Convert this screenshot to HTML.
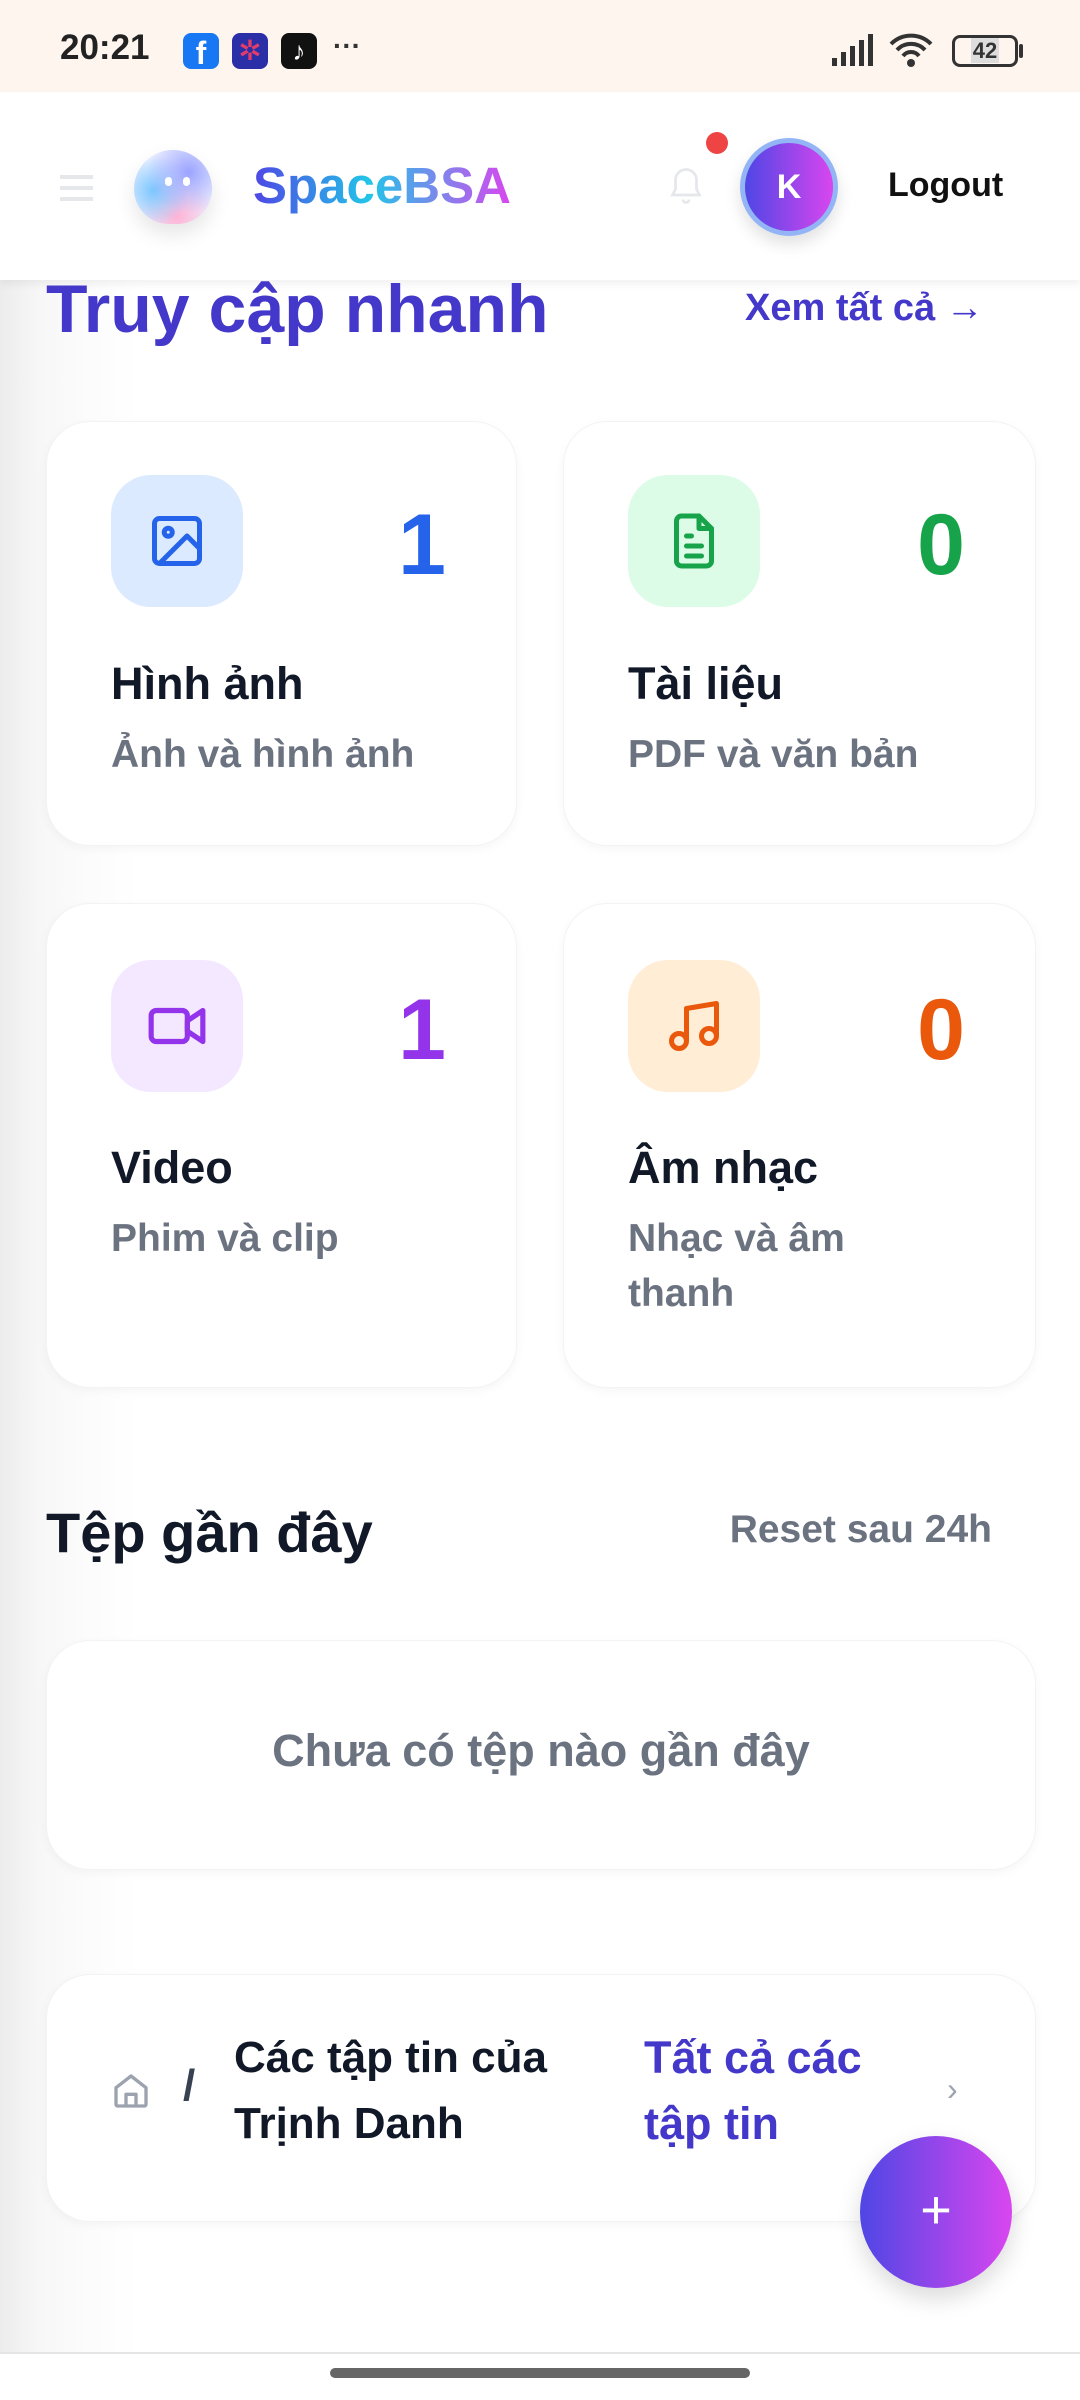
<!DOCTYPE html>
<html><head><meta charset="utf-8">
<style>
*{margin:0;padding:0;box-sizing:border-box}
body{width:1080px;height:2400px;position:relative;overflow:hidden;font-family:"Liberation Sans","Noto Sans CJK SC",sans-serif;background:linear-gradient(90deg,#ececec 0,#f7f7f7 40px,#fcfcfc 90px,#fff 140px)}
.abs{position:absolute}
.status{left:0;top:0;width:1080px;height:92px;background:#fdf5ee}
.header{left:0;top:92px;width:1080px;height:188px;background:#fff;box-shadow:0 4px 8px rgba(0,0,0,.06)}
.card{background:#fff;border-radius:44px;box-shadow:0 3px 10px rgba(0,0,0,.04);border:1px solid #f3f3f3}
.ib{width:132px;height:132px;border-radius:40px;display:flex;align-items:center;justify-content:center}
.num{font-weight:bold;font-size:86px;line-height:1}
.t{font-weight:bold;font-size:45px;color:#111827}
.s{font-weight:bold;font-size:39px;color:#6b7280;line-height:55px}
</style></head><body>
<div class="abs status">
 <div class="abs" style="left:60px;top:28px;font-size:35px;font-weight:bold;color:#222">20:21</div>
 <div class="abs" style="left:183px;top:33px;width:36px;height:36px;border-radius:8px;background:#1877f2;color:#fff;font-weight:bold;font-size:32px;text-align:center;line-height:40px">f</div>
 <div class="abs" style="left:232px;top:33px;width:36px;height:36px;border-radius:8px;background:#2a2fa8;color:#e23d6a;font-size:28px;text-align:center;line-height:36px">✲</div>
 <div class="abs" style="left:281px;top:33px;width:36px;height:36px;border-radius:8px;background:#111;color:#fff;font-size:26px;text-align:center;line-height:36px">♪</div>
 <div class="abs" style="left:333px;top:30px;font-size:28px;color:#333;font-weight:bold">···</div>
 <svg class="abs" style="left:832px;top:34px" width="48" height="32"><rect x="0" y="24" width="5" height="8" fill="#333"/><rect x="9" y="18" width="5" height="14" fill="#333"/><rect x="18" y="12" width="5" height="20" fill="#333"/><rect x="27" y="6" width="5" height="26" fill="#333"/><rect x="36" y="0" width="5" height="32" fill="#333"/></svg>
 <svg class="abs" style="left:888px;top:32px" width="46" height="36" viewBox="0 0 46 36"><path d="M3 12a28 28 0 0 1 40 0M9 18a19 19 0 0 1 28 0M15 24a10 10 0 0 1 16 0" stroke="#333" stroke-width="4" fill="none"/><circle cx="23" cy="31" r="4" fill="#333"/></svg>
 <div class="abs" style="left:952px;top:35px;width:66px;height:32px;border:3px solid #333;border-radius:8px;font-size:22px;font-weight:bold;color:#333;text-align:center;line-height:26px"><span style="background:#ddd;padding:0 2px">42</span></div>
 <div class="abs" style="left:1019px;top:44px;width:4px;height:14px;background:#333;border-radius:2px"></div>
</div>
<div class="abs header">
 <div class="abs" style="left:60px;top:83px;width:33px;height:4px;background:#e5e7eb;box-shadow:0 11px 0 #e5e7eb,0 22px 0 #e5e7eb"></div>
 <div class="abs" style="left:134px;top:58px;width:78px;height:74px;border-radius:40px 40px 36px 36px;background:radial-gradient(circle at 70% 30%,#9aa3ff,transparent 55%),radial-gradient(circle at 25% 55%,#7bc7ff,transparent 50%),radial-gradient(circle at 55% 90%,#ffb3d6,transparent 50%),#eef0ff;box-shadow:0 10px 20px rgba(0,0,0,.1)"></div>
 <div class="abs" style="left:165px;top:85px;width:7px;height:9px;border-radius:4px;background:#fff"></div>
 <div class="abs" style="left:183px;top:85px;width:7px;height:9px;border-radius:4px;background:#fff"></div>
 <div class="abs" style="left:253px;top:64px;font-size:51px;font-weight:bold;background:linear-gradient(90deg,#4f46e5,#22c5e8 45%,#d946ef);-webkit-background-clip:text;color:transparent">SpaceBSA</div>
 <svg class="abs" style="left:668px;top:72px" width="36" height="44" viewBox="0 0 24 28"><path d="M12 3a7 7 0 0 0-7 7v6l-2 4h18l-2-4v-6a7 7 0 0 0-7-7zM10 23a2 2 0 0 0 4 0" stroke="#e5e7eb" stroke-width="1.8" fill="none"/></svg>
 <div class="abs" style="left:706px;top:40px;width:22px;height:22px;border-radius:50%;background:#ef4444"></div>
 <div class="abs" style="left:740px;top:46px;width:98px;height:98px;border-radius:50%;border:5px solid #93b4f5;background:linear-gradient(90deg,#4f46e5,#d946ef);color:#fff;font-weight:bold;font-size:34px;text-align:center;line-height:88px;box-shadow:0 8px 16px rgba(0,0,0,.12)">K</div>
 <div class="abs" style="left:888px;top:74px;font-size:34px;font-weight:bold;color:#111">Logout</div>
</div>
<div class="abs" style="left:46px;top:270px;font-size:68px;font-weight:bold;color:#4338ca">Truy cập nhanh</div>
<div class="abs" style="left:745px;top:287px;font-size:38px;font-weight:bold;color:#4338ca">Xem tất cả →</div>

<div class="abs card" style="left:46px;top:421px;width:471px;height:425px">
 <div class="abs ib" style="left:64px;top:53px;background:#dbeafe"><svg width="60" height="60" viewBox="0 0 24 24" fill="none" stroke="#2563eb" stroke-width="2" stroke-linejoin="round"><rect x="3" y="3" width="18" height="18" rx="2"/><circle cx="8.5" cy="8.5" r="1.6"/><path d="M21 15l-5-5L5 21"/></svg></div>
 <div class="abs num" style="right:70px;top:80px;color:#2563eb">1</div>
 <div class="abs t" style="left:64px;top:236px">Hình ảnh</div>
 <div class="abs s" style="left:64px;top:305px">Ảnh và hình ảnh</div>
</div>
<div class="abs card" style="left:563px;top:421px;width:473px;height:425px">
 <div class="abs ib" style="left:64px;top:53px;background:#dcfce7"><svg width="60" height="60" viewBox="0 0 24 24" fill="none" stroke="#16a34a" stroke-width="2" stroke-linejoin="round" stroke-linecap="round"><path d="M14 2H7a2 2 0 0 0-2 2v16a2 2 0 0 0 2 2h10a2 2 0 0 0 2-2V7z"/><path d="M14 2v5h5M9 10h2M9 14h6M9 18h6"/></svg></div>
 <div class="abs num" style="right:70px;top:80px;color:#16a34a">0</div>
 <div class="abs t" style="left:64px;top:236px">Tài liệu</div>
 <div class="abs s" style="left:64px;top:305px">PDF và văn bản</div>
</div>
<div class="abs card" style="left:46px;top:903px;width:471px;height:485px">
 <div class="abs ib" style="left:64px;top:56px;background:#f3e8ff"><svg width="62" height="62" viewBox="0 0 24 24" fill="none" stroke="#9333ea" stroke-width="2" stroke-linejoin="round"><rect x="2" y="6" width="14" height="12" rx="2"/><path d="M16 10l6-4v12l-6-4z"/></svg></div>
 <div class="abs num" style="right:70px;top:83px;color:#9333ea">1</div>
 <div class="abs t" style="left:64px;top:238px">Video</div>
 <div class="abs s" style="left:64px;top:307px">Phim và clip</div>
</div>
<div class="abs card" style="left:563px;top:903px;width:473px;height:485px">
 <div class="abs ib" style="left:64px;top:56px;background:#ffedd5"><svg width="60" height="60" viewBox="0 0 24 24" fill="none" stroke="#ea580c" stroke-width="2" stroke-linejoin="round"><path d="M9 18V5l12-2v13"/><circle cx="6" cy="18" r="3"/><circle cx="18" cy="16" r="3"/></svg></div>
 <div class="abs num" style="right:70px;top:83px;color:#ea580c">0</div>
 <div class="abs t" style="left:64px;top:238px">Âm nhạc</div>
 <div class="abs s" style="left:64px;top:307px">Nhạc và âm<br>thanh</div>
</div>

<div class="abs" style="left:46px;top:1500px;font-size:56px;font-weight:bold;color:#111827">Tệp gần đây</div>
<div class="abs" style="right:88px;top:1508px;font-size:39px;font-weight:bold;color:#6b7280">Reset sau 24h</div>

<div class="abs card" style="left:46px;top:1640px;width:990px;height:230px;text-align:center;line-height:220px;font-size:45px;font-weight:bold;color:#6b7280">Chưa có tệp nào gần đây</div>

<div class="abs card" style="left:46px;top:1974px;width:990px;height:248px">
 <svg class="abs" style="left:64px;top:96px" width="40" height="40" viewBox="0 0 24 24" fill="none" stroke="#9ca3af" stroke-width="2" stroke-linejoin="round"><path d="M3 10l9-7 9 7v10a1 1 0 0 1-1 1H4a1 1 0 0 1-1-1z"/><path d="M9 21v-7h6v7"/></svg>
 <div class="abs" style="left:136px;top:86px;font-size:44px;font-weight:bold;color:#374151">/</div>
 <div class="abs" style="left:187px;top:50px;font-size:44px;font-weight:bold;color:#111827;line-height:66px">Các tập tin của<br>Trịnh Danh</div>
 <div class="abs" style="left:597px;top:50px;font-size:45px;font-weight:bold;color:#4338ca;line-height:66px">Tất cả các<br>tập tin</div>
 <div class="abs" style="left:900px;top:96px;font-size:32px;color:#9ca3af">›</div>
</div>

<div class="abs" style="left:860px;top:2136px;width:152px;height:152px;border-radius:50%;background:linear-gradient(90deg,#4f46e5,#d946ef);box-shadow:0 10px 24px rgba(0,0,0,.15);color:#fff;font-size:54px;text-align:center;line-height:148px">+</div>

<div class="abs" style="left:0;top:2352px;width:1080px;height:48px;background:#fff;border-top:2px solid #e5e5e5"></div>
<div class="abs" style="left:330px;top:2368px;width:420px;height:10px;border-radius:5px;background:#666"></div>
</body></html>
